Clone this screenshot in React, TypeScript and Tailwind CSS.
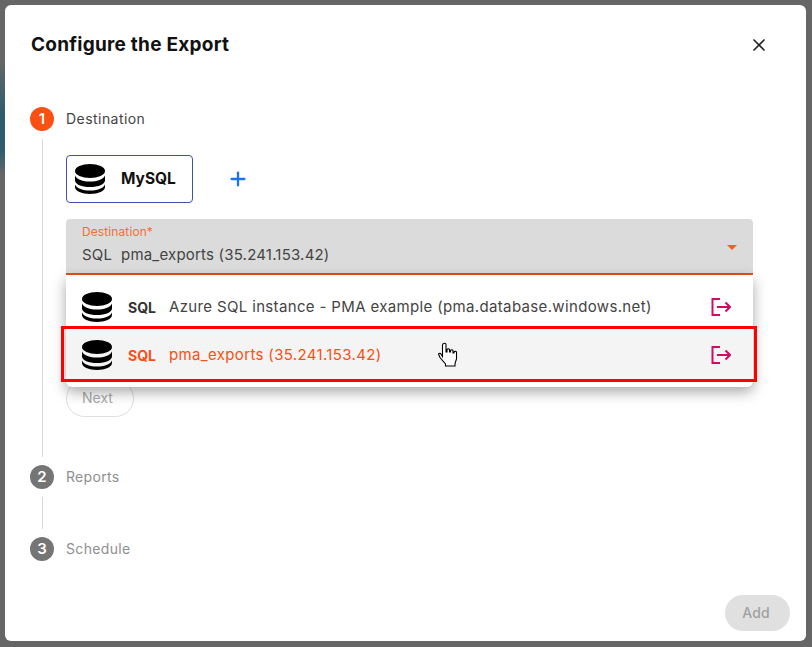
import React from 'react'
import { X, Plus } from 'lucide-react'

const DbIcon = ({ className }: { className: string }) => (
  <svg viewBox="0 0 30 30" className={className} fill="currentColor">
    <ellipse cx="15" cy="7" rx="15" ry="7" />
    <path d="M0 11.5C2 15.5 8 17.5 15 17.5S28 15.5 30 11.5V16.5C30 20.3 23.3 23 15 23S0 20.3 0 16.5Z" />
    <path d="M0 20.5C2 24.5 8 26.5 15 26.5S28 24.5 30 20.5V23C30 27 23.3 30 15 30S0 27 0 23Z" />
  </svg>
)

const ExitIcon = () => (
  <svg viewBox="0 0 20 18" className="h-[18px] w-[20px] text-[#cc0f62]" fill="none" stroke="currentColor" strokeWidth="2">
    <path d="M9 1H1.5V17H9" />
    <path d="M6 9H18.5" />
    <path d="M14.5 4.5L19 9L14.5 13.5" />
  </svg>
)

const StepBadge = ({ n, active }: { n: number; active?: boolean }) => (
  <div
    className={`flex h-6 w-6 shrink-0 items-center justify-center rounded-full text-[15px] font-semibold text-white ${
      active ? 'bg-[#fc4f13]' : 'bg-[#757575]'
    }`}
  >
    {n}
  </div>
)

const MenuRow = ({ name, selected }: { name: string; selected?: boolean }) => (
  <div className={`flex h-12 items-center pl-[16px] pr-[22px] ${selected ? 'bg-[#f4f4f4] text-[#fc4f13]' : 'text-[#444]'}`}>
    <DbIcon className="h-[30px] w-[30px] text-black" />
    <span className={`ml-[16px] w-[41px] text-[14px] font-bold ${selected ? '' : 'text-[#333]'}`}>SQL</span>
    <span className="flex-1 text-[15px] tracking-[0.35px]">{name}</span>
    <ExitIcon />
  </div>
)

export default function App() {
  return (
    <div className="relative h-[647px] w-[812px] overflow-hidden bg-[#666666] p-[5px] font-['Inter',sans-serif]">
      {/* Teal of the page behind the backdrop, seen down the left edge */}
      <div className="absolute left-0 top-0 h-[300px] w-[5px] bg-[linear-gradient(to_bottom,#666666_60px,#2f5c6e_115px,#2f5c6e_150px,#666666_175px)]" />
      <div className="relative flex h-[636px] w-[801px] flex-col rounded-[6px] bg-white pl-[25px] pr-[36px]">
        {/* Header */}
        <div className="flex h-[80px] shrink-0 items-center justify-between">
          <h2 className="ml-[1px] text-[19px] font-bold tracking-[0.25px] text-[#111]">Configure the Export</h2>
          <button className="mr-[1px] text-[#222]">
            <X className="h-[20px] w-[20px]" strokeWidth={2} />
          </button>
        </div>

        {/* Step 1 */}
        <div className="mt-[22px] flex items-center gap-3">
          <StepBadge n={1} active />
          <span className="-mt-[2px] text-[14px] tracking-[0.45px] text-[#444]">Destination</span>
        </div>
        <div className="ml-[11.5px] mt-[8px] h-[318px] border-l border-[#d9d9d9] pl-[23.5px] pt-[16px]">
          <div className="flex items-center">
            <div className="flex h-[48px] w-[127px] items-center rounded-[4px] border border-[#3f51b5] pl-[8px]">
              <DbIcon className="h-[30px] w-[30px] text-black" />
              <span className="ml-[16px] text-[15.5px] font-bold text-[#111]">MySQL</span>
            </div>
            <Plus className="ml-[34px] h-[22px] w-[22px] text-[#1a73f0]" strokeWidth={2.5} />
          </div>

          <div className="relative mt-[16px] h-[56px] w-[687px] rounded-t-[4px] border-b-2 border-[#e8500f] bg-[#dbdbdb] px-[16px] pt-[6px]">
            <div className="text-[12px] leading-[13px] tracking-[0.1px] text-[#fc6a34]">Destination*</div>
            <div className="mt-[7px] text-[15px] leading-[20px] tracking-[0.2px] text-[#444]">
              SQL&nbsp; pma_exports (35.241.153.42)
            </div>
            <div className="absolute right-[16px] top-[26px] h-0 w-0 border-x-[5px] border-t-[5px] border-x-transparent border-t-[#fc5c1e]" />

            {/* Dropdown menu */}
            <div className="absolute left-0 top-[56px] z-10 w-[687px] rounded-b-[6px] bg-white py-2 shadow-[0_5px_14px_rgba(0,0,0,0.35)]">
              <MenuRow name="Azure SQL instance - PMA example (pma.database.windows.net)" />
              <MenuRow name="pma_exports (35.241.153.42)" selected />
              {/* Red annotation around the hovered row */}
              <div className="absolute -left-[5px] top-[51px] h-[56px] w-[696px] border-[3px] border-[#ff0000]" />
              {/* Hand cursor */}
              <svg className="absolute left-[371px] top-[67px]" width="22" height="26" viewBox="0 0 22 26">
                <path
                  d="M7 1.5C8 .8 9 1.5 9 2.5V10H10V7.5C10.5 6.5 12 6.5 12.5 7.5V10H13.5V8.5C14 7.5 15.5 7.5 16 8.5V11H17V10C17.5 9 19 9 19.5 10V17L18 21.5V24H8.5V22L3 15.5 1.5 12C2 11 3.5 11 4 12L5.5 14.5V3C5.5 2.3 6.3 1.5 7 1.5Z"
                  fill="#fff"
                  stroke="#000"
                  strokeWidth="1.1"
                />
              </svg>
            </div>
          </div>

          <button className="mt-[105px] flex h-[37px] w-[68px] items-center justify-center rounded-full border border-[#dedede] pb-[2px] pr-[5px] text-[14px] text-[#aaa]">
            Next
          </button>
        </div>

        {/* Step 2 */}
        <div className="mt-[8px] flex items-center gap-3">
          <StepBadge n={2} />
          <span className="-mt-[2px] text-[14px] tracking-[0.3px] text-[#8f8f8f]">Reports</span>
        </div>
        <div className="ml-[11.5px] mt-[8px] h-[32px] border-l border-[#d9d9d9]" />

        {/* Step 3 */}
        <div className="mt-[8px] flex items-center gap-3">
          <StepBadge n={3} />
          <span className="-mt-[2px] text-[14px] tracking-[0.35px] text-[#8f8f8f]">Schedule</span>
        </div>

        {/* Footer */}
        <div className="-mr-[20px] mt-[34px] flex justify-end">
          <button className="flex h-[36px] w-[65px] items-center justify-center rounded-full bg-[#e0e0e0] pb-[1px] pr-[3px] text-[14px] font-medium tracking-[0.2px] text-[#a0a0a0]">
            Add
          </button>
        </div>
      </div>
    </div>
  )
}
